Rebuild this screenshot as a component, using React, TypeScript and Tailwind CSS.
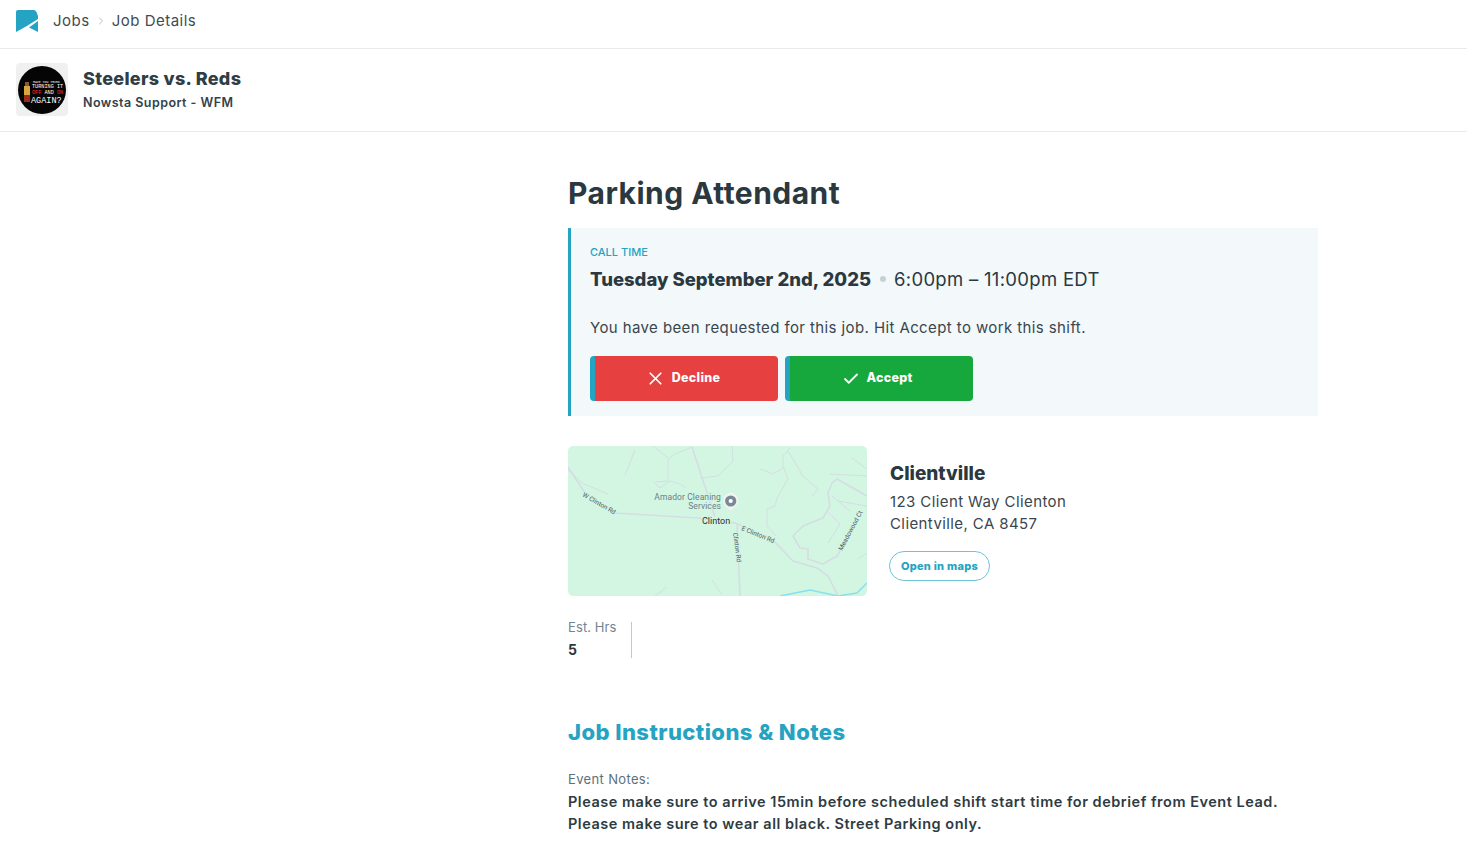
import { Check, ChevronRight, X } from "lucide-react";

const font = { fontFamily: "Inter, sans-serif" };

function Logo() {
  return (
    <svg width="22" height="22" viewBox="0 0 22 22">
      <path d="M0 2Q0 0 2 0H17.5Q19.5 0 20.5 2L22 6V9L10 16.5L0 22Z" fill="#25a3c2" />
      <path d="M22 11V22L13 17.5Z" fill="#25a3c2" />
    </svg>
  );
}

function Avatar() {
  return (
    <div className="flex h-[53px] w-[52px] items-center justify-center rounded-[4px] bg-[#f0f0f0]">
      <svg width="48" height="50" viewBox="0 0 48 50">
        <circle cx="24" cy="25" r="24" fill="#050505" />
        <rect x="6" y="21" width="6" height="9" fill="#d9a441" />
        <rect x="7" y="17" width="4" height="4" fill="#8a5a2b" />
        <rect x="6" y="30" width="6" height="7" fill="#9a2a1a" />
        <g fontFamily="Liberation Mono" fill="#ffffff">
          <text x="15" y="17.5" fontSize="3.2">HAVE YOU TRIED</text>
          <text x="14" y="23" fontSize="5.2">TURNING IT</text>
          <text x="14" y="29" fontSize="5.2">
            <tspan fill="#ff2a2a">OFF</tspan> AND <tspan fill="#ff2a2a">ON</tspan>
          </text>
          <text x="13" y="38" fontSize="8.5">AGAIN?</text>
        </g>
      </svg>
    </div>
  );
}

function MapPicture() {
  const road = "#d5dde3";
  const label = { fontFamily: "Roboto, sans-serif", paintOrder: "stroke" as const };
  return (
    <svg width="299" height="150" viewBox="0 0 299 150" className="block rounded-[5px] bg-[#d2f6e2]">
      <g fill="none" stroke={road} strokeWidth="1">
        <path d="M0 24L14 37L40 48" />
        <path d="M67 4L57 29" />
        <path d="M124 1L105 9L100 14L100 35L88 36M85 35L92 42L102 35L112 38L118 42" />
        <path d="M85 0L100 12" />
        <path d="M164 0L165 15L150 30L132 32" />
        <path d="M222 2L215 10L215 20L220 33L209 52L207 60L199 63L199 80L208 90" />
        <path d="M220 5L235 30L250 43L244 50" />
        <path d="M264 50L282 65" />
        <path d="M259 65L272 78L260 97" />
        <path d="M262 28L299 30" />
        <path d="M284 12L299 23" />
        <path d="M270 55L299 60" />
        <path d="M192 23L205 28L215 22" />
        <path d="M290 113L299 107" />
        <path d="M87 150L99 141" />
        <path d="M144 134L154 149" />
      </g>
      <g fill="none" stroke={road} strokeWidth="1.6" strokeLinejoin="round">
        <path d="M0 21L17 47L47 67L130 72L167 77L204 93L225 115L249 122L260 130L270 150" />
        <path d="M124 1L147 71" />
        <path d="M169 77L172 150" />
        <path d="M299 50L269 33L264 37L260 47L262 60L255 72L235 80L225 90L232 102L240 103L240 113L255 118L269 110L275 100" />
      </g>
      <path d="M212 150L242 144L270 150L289 147L299 137" fill="none" stroke="#86e0ee" strokeWidth="1.5" />
      <g {...label} fontSize="6.5" fill="#4d5863" stroke="#d2f6e2" strokeWidth="1.5">
        <text x="14" y="50" transform="rotate(30 14 50)">W Clinton Rd</text>
        <text x="173" y="84" transform="rotate(22 173 84)">E Clinton Rd</text>
        <text x="165" y="87" transform="rotate(82 165 87)">Clinton Rd</text>
        <text x="274" y="105" transform="rotate(-62 274 105)">Meadowood Ct</text>
      </g>
      <g {...label} fontSize="8.5" fill="#6f7c88" textAnchor="end" stroke="#d2f6e2" strokeWidth="1.5" letterSpacing="0.1">
        <text x="153" y="54">Amador Cleaning</text>
        <text x="153" y="63">Services</text>
      </g>
      <text {...label} x="134" y="78" fontSize="9" fill="#2b3035" stroke="#d2f6e2" strokeWidth="1.5">Clinton</text>
      <path d="M162.7 65L157 59.5A7.6 7.6 0 1 1 168.4 59.5Z" fill="#eef4f2" />
      <circle cx="162.7" cy="55" r="5.6" fill="#7b8896" />
      <circle cx="162.7" cy="55" r="2.1" fill="#ffffff" />
    </svg>
  );
}

export default function App() {
  return (
    <div className="min-h-[843px] overflow-hidden bg-white text-[#2b3840]" style={font}>
      <div className="flex h-[49px] items-center gap-[15px] border-b border-[#e8eaec] pb-[6px] pl-4">
        <Logo />
        <div className="flex items-center gap-[5px] text-[15px] tracking-[0.5px] text-[#3f4b52]">
          <span>Jobs</span>
          <ChevronRight size={12} className="text-[#b4bcc2]" />
          <span>Job Details</span>
        </div>
      </div>

      <div className="flex h-[83px] items-start gap-[15px] border-b border-[#e8eaec] pl-4 pt-[14px]">
        <Avatar />
        <div className="pt-[3px]">
          <div className="text-[18px] font-extrabold leading-[26px] tracking-[0.3px] text-[#2f3d45]">Steelers vs. Reds</div>
          <div className="mt-[2px] text-[12.5px] font-semibold leading-[18px] tracking-[0.45px] text-[#35424a]">Nowsta Support - WFM</div>
        </div>
      </div>

      <main className="ml-[568px] w-[750px]">
        <h1 className="mt-[41px] text-[30px] font-bold leading-[40px] tracking-[0.47px] text-[#2b3840]">Parking Attendant</h1>

        <section className="mt-[15px] h-[188px] border-l-[3px] border-[#25a3c2] bg-[#f3f8fb] pl-[19px] pt-[16px]">
          <div className="text-[11px] font-medium leading-[16px] text-[#25a3c2]">CALL TIME</div>
          <div className="mt-[5px] flex items-center text-[18.5px] leading-[28px]">
            <span className="font-extrabold">Tuesday September 2nd, 2025</span>
            <span className="mx-[8.5px] h-[6px] w-[6px] rounded-full bg-[#c9d0d5]" />
            <span className="tracking-[0.3px]">6:00pm – 11:00pm EDT</span>
          </div>
          <p className="mt-[23px] text-[15px] leading-[24px] tracking-[0.4px] text-[#3a464d]">
            You have been requested for this job. Hit Accept to work this shift.
          </p>
          <div className="mt-[16px] flex gap-[7px]">
            <button className="flex h-[45px] w-[188px] items-center justify-center gap-[6px] rounded-[4px] border-l-[5px] border-[#25a3c2] bg-[#e64040] pr-[8px] text-[12.5px] font-extrabold tracking-[0.3px] text-white">
              <X size={21} strokeWidth={2} />
              Decline
            </button>
            <button className="flex h-[45px] w-[188px] items-center justify-center gap-[6px] rounded-[4px] border-l-[5px] border-[#25a3c2] bg-[#16a83c] pr-[8px] text-[12.5px] font-extrabold tracking-[0.3px] text-white">
              <Check size={18} strokeWidth={2.4} />
              Accept
            </button>
          </div>
        </section>

        <section className="mt-[30px] flex gap-[23px]">
          <MapPicture />
          <div className="pt-[15px]">
            <div className="text-[19px] font-extrabold leading-[26px] text-[#2b3840]">Clientville</div>
            <div className="mt-[4px] text-[15px] leading-[22px] tracking-[0.4px] text-[#3a464d]">
              <div>123 Client Way Clienton</div>
              <div>Clientville, CA 8457</div>
            </div>
            <button className="-ml-px mt-[16px] flex h-[30px] w-[101px] items-center justify-center rounded-full border border-[#6fc3d8] text-[11px] font-extrabold tracking-[0.25px] text-[#25a3c2]">
              Open in maps
            </button>
          </div>
        </section>

        <section className="mt-[26px] flex">
          <div className="h-[36px] w-[64px] border-r border-[#c3c8cc]">
            <div className="text-[13px] leading-[11px] tracking-[0.1px] text-[#74848f]">Est. Hrs</div>
            <div className="mt-[8px] text-[14px] font-bold leading-[18px] text-[#2b3840]">5</div>
          </div>
        </section>

        <h2 className="mt-[59px] text-[22px] font-extrabold leading-[30px] tracking-[0.44px] text-[#25a3c2]">Job Instructions &amp; Notes</h2>

        <section className="mt-[23px]">
          <div className="text-[13px] leading-[18px] tracking-[0.35px] text-[#5d6f7a]">Event Notes:</div>
          <div className="mt-[3px] text-[14.5px] font-semibold leading-[22px] tracking-[0.52px] text-[#2f3b42]">
            <div>Please make sure to arrive 15min before scheduled shift start time for debrief from Event Lead.</div>
            <div>Please make sure to wear all black. Street Parking only.</div>
          </div>
        </section>
      </main>
    </div>
  );
}
